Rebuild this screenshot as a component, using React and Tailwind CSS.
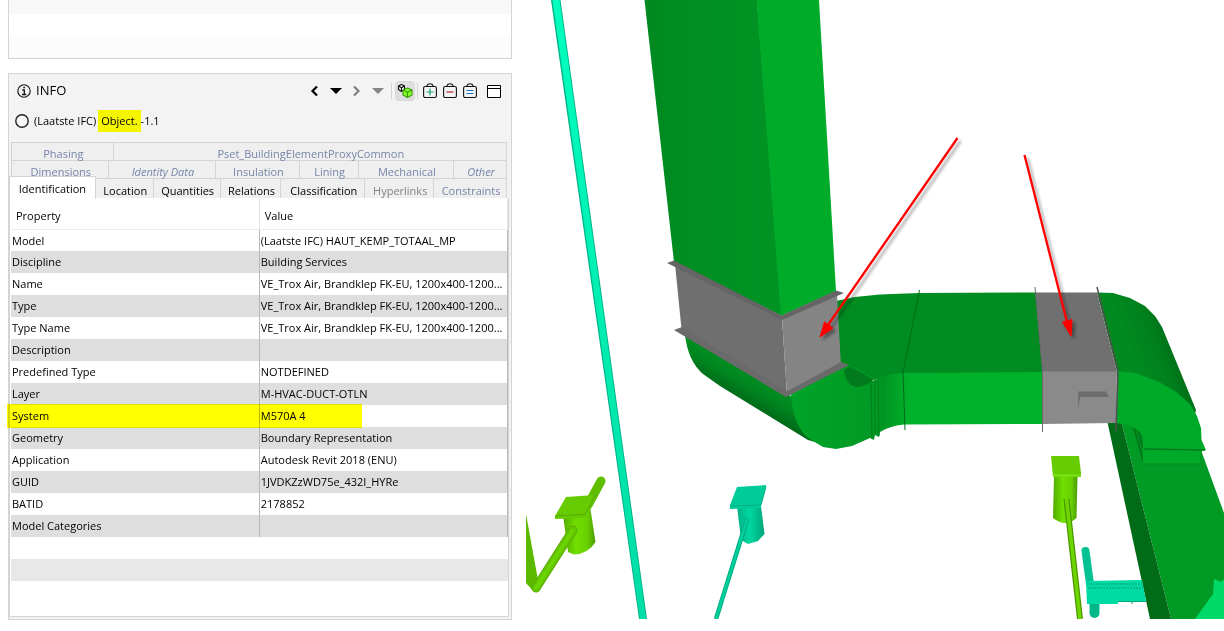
import React from 'react'

const rows = [
  ['Model', '(Laatste IFC) HAUT_KEMP_TOTAAL_MP'],
  ['Discipline', 'Building Services'],
  ['Name', 'VE_Trox Air, Brandklep FK-EU, 1200x400-1200...'],
  ['Type', 'VE_Trox Air, Brandklep FK-EU, 1200x400-1200...'],
  ['Type Name', 'VE_Trox Air, Brandklep FK-EU, 1200x400-1200...'],
  ['Description', ''],
  ['Predefined Type', 'NOTDEFINED'],
  ['Layer', 'M-HVAC-DUCT-OTLN'],
  ['System', 'M570A 4'],
  ['Geometry', 'Boundary Representation'],
  ['Application', 'Autodesk Revit 2018 (ENU)'],
  ['GUID', '1JVDKZzWD75e_432I_HYRe'],
  ['BATID', '2178852'],
  ['Model Categories', ''],
]

function Tab({ children, className = 'text-[#7685a9]' }) {
  return (
    <button
      type="button"
      className={`border-r border-[#d4d4d4] pt-[3px] pl-0.5 whitespace-nowrap text-center ${className}`}
    >
      {children}
    </button>
  )
}

function ToolButton({ label, className = 'w-5', children }) {
  return (
    <button type="button" aria-label={label} className={`h-5 flex items-center justify-center ${className}`}>
      {children}
    </button>
  )
}

function Chevron({ d, color }) {
  return (
    <svg width="9" height="12" viewBox="0 0 9 12" fill="none" stroke={color} strokeWidth="2.2">
      <path d={d} />
    </svg>
  )
}

function Triangle({ color }) {
  return (
    <svg width="12" height="8" viewBox="0 0 12 8" fill={color}>
      <path d="M0 1h12L6 7z" />
    </svg>
  )
}

function Bag({ children, color }) {
  return (
    <svg width="14" height="16" viewBox="0 0 14 16" fill="none" stroke="#111">
      <rect x=".6" y="3.5" width="12.8" height="11" rx="1.6" strokeWidth="1.1" />
      <path d="M3.500 3.500L5 1.200Q7 .2 9 1.200L10.500 3.500" strokeWidth="1.1" />
      <g stroke={color} strokeWidth="1.2">{children}</g>
    </svg>
  )
}

function Cubes() {
  return (
    <svg width="16" height="16" viewBox="0 0 16 16" strokeLinejoin="round">
      <g fill="#eee" stroke="#111" strokeWidth="1.1">
        <path d="M4.500 1.500L7.500 3v3.500L4.500 8.500 1.500 6.500V3z" />
        <path d="M1.500 3l3 1.800L7.500 3M4.500 4.800v3.700" fill="none" />
      </g>
      <g fill="#7fff2a" stroke="#3c9a0c" strokeWidth="1.1">
        <path d="M10.500 5l4.500 2v5l-4.500 2.500L6 12V7z" />
        <path d="M6 7l4.500 2.300L15 7M10.500 9.300v5.200" fill="none" />
      </g>
    </svg>
  )
}

function Toolbar() {
  return (
    <div className="flex items-center">
      <ToolButton label="Back" className="w-[21px]"><Chevron d="M7 1.500L2.500 6 7 10.500" color="#000" /></ToolButton>
      <ToolButton label="Back history" className="w-[21px]"><Triangle color="#000" /></ToolButton>
      <ToolButton label="Forward" className="w-[21px]"><Chevron d="M2 1.500L6.500 6 2 10.500" color="#808080" /></ToolButton>
      <ToolButton label="Forward history" className="w-[21px]"><Triangle color="#858585" /></ToolButton>
      <span className="w-px h-4 bg-[#d4d4d4] mx-[3px]" />
      <ToolButton label="Show related" className="w-5 rounded border border-[#d8d8d8] bg-[#dedede]">
        <Cubes />
      </ToolButton>
      <span className="w-px h-4 bg-[#d4d4d4] mx-0.5" />
      <ToolButton label="Add to basket">
        <Bag color="#12a577"><path d="M7 5.500v7M3.500 9h7" /></Bag>
      </ToolButton>
      <ToolButton label="Remove from basket">
        <Bag color="#b8232f"><path d="M3.500 9h7" /></Bag>
      </ToolButton>
      <ToolButton label="Set basket">
        <Bag color="#1672c4"><path d="M3.500 7.500h7M3.500 10.500h7" /></Bag>
      </ToolButton>
      <ToolButton label="Window" className="w-5 ml-1">
        <svg width="14" height="14" viewBox="0 0 14 14" fill="#fff" stroke="#000">
          <path d="M.5 1.500h13v12H.5zM.5 4.500h13" />
        </svg>
      </ToolButton>
    </div>
  )
}

function InfoPanel() {
  return (
    <section className="flex flex-col border border-[#d4d4d4] bg-[#f3f3f3]">
      <header className="h-[34px] flex items-center justify-between pl-2 pr-[7px]">
        <h2 className="flex items-center gap-[5px] text-[13px]">
          <svg width="14" height="14" viewBox="0 0 14 14" fill="none" stroke="#111">
            <circle cx="7" cy="7" r="6.200" strokeWidth="1.100" />
            <path d="M5.300 6H7.300v4.500M5 10.500h4.300M6.300 3.500h1.600" strokeWidth="1.300" />
          </svg>
          INFO
        </h2>
        <Toolbar />
      </header>

      <div className="h-[26px] mb-2 flex items-center pl-1.5 text-[11px]">
        <svg className="mr-[5px]" width="14" height="14" viewBox="0 0 14 14" fill="#fafafa" stroke="#222">
          <circle cx="7" cy="7" r="6.200" strokeWidth="1.400" />
        </svg>
        <span>(Laatste IFC)</span>
        <mark className="h-[22px] leading-[22px] bg-[#f5f500] text-black ml-0.5 px-[3px]">Object.</mark>
        <span>-1.1</span>
      </div>

      <nav className="mx-0.5 mr-1 text-[11px] leading-[15px] text-black">
        <div className="h-[18px] grid grid-cols-[102fr_395fr] border-t border-l border-[#d4d4d4] bg-[#efefef]">
          <Tab>Phasing</Tab>
          <Tab>Pset_BuildingElementProxyCommon</Tab>
        </div>
        <div className="h-[18px] grid grid-cols-[97fr_108fr_84fr_59fr_96fr_53fr] border-t border-l border-[#d4d4d4] bg-[#efefef]">
          <Tab>Dimensions</Tab>
          <Tab className="text-[#7685a9] italic">Identity Data</Tab>
          <Tab>Insulation</Tab>
          <Tab>Lining</Tab>
          <Tab>Mechanical</Tab>
          <Tab className="text-[#7685a9] italic">Other</Tab>
        </div>
        <div className="h-5 grid grid-cols-[85fr_58fr_67fr_61fr_84fr_69fr_73fr] border-t border-[#d4d4d4] bg-[#efefef]">
          <button
            type="button"
            className="relative -mt-[3px] -ml-0.5 h-[23px] border border-b-0 border-[#d4d4d4] bg-white text-center"
          >
            Identification
          </button>
          <Tab className="text-black">Location</Tab>
          <Tab className="text-black">Quantities</Tab>
          <Tab className="text-black">Relations</Tab>
          <Tab className="text-black">Classification</Tab>
          <Tab className="text-[#858585]">Hyperlinks</Tab>
          <Tab>Constraints</Tab>
        </div>
      </nav>

      <div className="mr-0.5 mb-0.5 pl-px pt-px bg-white border-x border-b border-[#d4d4d4] text-[11px]">
        <table className="w-full table-fixed border-collapse text-left">
          <thead>
            <tr className="h-[30px] border-b border-[#ebebeb]">
              <th className="p-0 pt-1 pl-[5px] font-normal border-r border-[#e4e4e4]">Property</th>
              <th className="p-0 pt-1 pl-[5px] font-normal border-r border-[#e4e4e4]">Value</th>
            </tr>
          </thead>
          <tbody>
            {rows.map(([name, value]) => (
              <tr key={name} className="h-[22px] even:bg-[#dedede]">
                <td className="relative p-0 pt-px pl-px border-r border-[#b8b8b8] whitespace-nowrap">
                  {name}
                  {name === 'System' && (
                    <span className="absolute z-10 -left-1 -top-px w-[355px] h-6 bg-[#ffff00] mix-blend-multiply" />
                  )}
                </td>
                <td className="p-0 pt-px pl-px border-r border-[#b8b8b8] whitespace-nowrap">{value}</td>
              </tr>
            ))}
          </tbody>
        </table>
        <div className="mt-[22px] mb-[35px] h-[22px] bg-[#e8e8e8]" />
      </div>
    </section>
  )
}

function Viewer() {
  return (
    <svg className="w-full h-auto block" viewBox="526 0 698 619" role="img" aria-label="3D model">
      <defs>
        <linearGradient id="side" x1="0" x2="1" y1="0" y2="0">
          <stop offset="0" stopColor="#008a20" />
          <stop offset="1" stopColor="#009424" />
        </linearGradient>
        <linearGradient id="pipe" x1="0" x2="0" y1="0" y2="1">
          <stop offset="0" stopColor="#00ffbf" />
          <stop offset="1" stopColor="#00dda6" />
        </linearGradient>
        <linearGradient id="bend" gradientUnits="userSpaceOnUse" x1="757" y1="372" x2="738" y2="405">
          <stop offset="0" stopColor="#009022" />
          <stop offset=".4" stopColor="#008820" />
          <stop offset="1" stopColor="#006016" />
        </linearGradient>
        <linearGradient id="elbow" gradientUnits="userSpaceOnUse" x1="1130" y1="350" x2="1182" y2="330">
          <stop offset="0" stopColor="#008a20" />
          <stop offset=".5" stopColor="#007f1c" />
          <stop offset="1" stopColor="#005e14" />
        </linearGradient>
        <linearGradient id="front" gradientUnits="userSpaceOnUse" x1="790" y1="0" x2="910" y2="0">
          <stop offset="0" stopColor="#00a427" />
          <stop offset=".65" stopColor="#009a24" />
          <stop offset=".78" stopColor="#009523" />
          <stop offset="1" stopColor="#00b22b" />
        </linearGradient>
        <linearGradient id="lime" x1="0" x2="1" y1="0" y2="0">
          <stop offset="0" stopColor="#52aa00" />
          <stop offset=".4" stopColor="#70df00" />
          <stop offset=".75" stopColor="#68d000" />
          <stop offset="1" stopColor="#4c9a00" />
        </linearGradient>
        <linearGradient id="teal" x1="0" x2="1" y1="0" y2="0">
          <stop offset="0" stopColor="#00b083" />
          <stop offset=".45" stopColor="#00d7a2" />
          <stop offset="1" stopColor="#00a67a" />
        </linearGradient>
        <filter id="shadow" x="-20%" y="-20%" width="140%" height="140%">
          <feDropShadow dx="3" dy="3" stdDeviation="1.500" floodColor="#000" floodOpacity=".35" />
        </filter>
      </defs>

      {/* long pipe */}
      <path d="M551 0H560.500L647 619H639z" fill="#00b589" />
      <path d="M552.500 0H559.500L646 619H640z" fill="url(#pipe)" />

      {/* large duct running to the bottom right */}
      <path d="M1121 420H1190L1224 513V619H1171z" fill="#009a24" />
      <path d="M1107 420H1121L1171 619H1150z" fill="#006c18" />
      <path d="M1195 619L1213 594 1214 579 1221 582 1224 579V619z" fill="#00d868" />
      <path d="M1120 422Q1138 424 1143 437V463L1133 427z" fill="#008a20" />
      <path d="M1134 428L1143 461M1138 430L1143 448" stroke="#006c18" fill="none" />

      {/* right elbow */}
      <path d="M1097 292.500L1113 293 1130 298 1145 306 1155 316 1162 327 1196 410 1195 414 1160 385 1117 372z" fill="url(#elbow)" />
      <path d="M1117 371L1135 373 1157 381 1175 391 1190 404 1197 416 1201 428 1201.500 440 1206 450 1202 451 1202 464H1143V437Q1138 425 1116 423z" fill="#00aa29" />
      <path d="M1144 449L1205 450" stroke="#007a1c" strokeWidth="1.300" />
      <path d="M1143 464H1201V453" fill="none" stroke="#008a20" />

      {/* bend under the vertical duct */}
      <path d="M685 335L791 396 815 405 815 442 808 440 720 386 703 374Q688 361 685 335z" fill="url(#bend)" />

      {/* horizontal duct */}
      <path d="M836 301L855 297 880 294.500 919 293 1036 292.500 1043 373 905 374 880 378 870 381 840 366z" fill="#008c21" />
      <path d="M791 394L845 366 862 375 873 381Q887 373 903 373L1043 372V424L904 424.500Q889 426 880 432L879 437 875 435 874 440 870 438 852 446 836 449 823 447 808 438Q793 425 791 394z" fill="url(#front)" />
      <path d="M844 370Q846 386 857 387 867 386 873 380L862 373 849 367z" fill="#007a1c" />
      <path d="M871 380L872 439M875 379V434M878 377L879 436" stroke="#007f1e" fill="none" />
      <path d="M849 365L874 379" stroke="#009c25" fill="none" />
      <path d="M919.500 290L903 372 905 430" stroke="#006c18" fill="none" />

      {/* vertical duct */}
      <path d="M644.500 0H757L782 316 674 262z" fill="url(#side)" />
      <path d="M756.500 0H819L836 291 781 316z" fill="#00ab29" />

      {/* left damper */}
      <path d="M675 264L782 318 787 394 681.500 329z" fill="#6f6f6f" />
      <path d="M782 318L837 294 841 366 787 394z" fill="#848484" />
      <path d="M667 263L674 260.500 781.500 315.500 836 290.500 844 293 782 320z" fill="#656565" />
      <path d="M674 330L682 327 787 391.500 841 362 849 365 786 397z" fill="#6a6a6a" />

      {/* right damper */}
      <path d="M1035.500 292.500H1097L1117 372H1042.500z" fill="#707070" />
      <path d="M1042.500 371.500H1117L1116 423 1042.500 424z" fill="#8a8a8a" />
      <path d="M1035 287L1042.500 371V432" stroke="#686868" fill="none" />
      <path d="M1097 287L1118 371 1116 431" stroke="#505050" strokeWidth="1.500" fill="none" />
      <path d="M1078 391.500H1106L1109 397H1080L1078.500 409z" fill="#6c6c6c" />

      {/* lime terminals */}
      <path d="M526 514L538 580 534 592 526 583z" fill="#5cb900" />
      <path d="M588 505L601 481" stroke="#5fbe00" strokeWidth="9" strokeLinecap="round" />
      <path d="M563 515L590 506 595.500 542Q588 554 574 554.500L568 552z" fill="url(#lime)" />
      <path d="M555 516L566 497 595 495 586 514 585 518 555 519z" fill="#66cb00" />
      <path d="M555 516L585 514.500 595 495" fill="none" stroke="#57ad00" />
      <path d="M573 530L536 588" stroke="#58ab00" strokeWidth="9" strokeLinecap="round" />
      <path d="M573 530L536 588" stroke="#64c700" strokeWidth="7" strokeLinecap="round" />
      <path d="M573 530L536 588" stroke="#6bd600" strokeWidth="3" strokeLinecap="round" />

      <path d="M1054 476H1077.500L1076.500 518Q1066 528 1053 518z" fill="url(#lime)" />
      <path d="M1051 456H1079L1081 473V477H1053z" fill="#66cb00" />
      <path d="M1053 475.500H1081" stroke="#7be51a" strokeWidth="2" />
      <path d="M1066.500 499L1080 619" stroke="#4c9600" strokeWidth="6" />
      <path d="M1066.500 499L1080 619" stroke="#6dd600" strokeWidth="3.500" />

      {/* teal terminals */}
      <path d="M737 506H761L764.500 534 758 541 748 544 741 540z" fill="url(#teal)" />
      <path d="M737 487L766 485 765 492 761 505V508L730 509V505z" fill="#00cc99" />
      <path d="M730 506L761 505 766 486" stroke="#00ae83" fill="none" />
      <path d="M747.500 518L716 619" stroke="#00ae82" strokeWidth="4.500" />
      <path d="M747.500 518L716 619" stroke="#00d09c" strokeWidth="2.500" />

      <path d="M1085.500 551L1090 584" stroke="#00c292" strokeWidth="8" strokeLinecap="round" />
      <path d="M1094.500 602V613" stroke="#00b789" strokeWidth="10" strokeLinecap="round" />
      <path d="M1086 581L1142 580 1146 601H1118V604H1087z" fill="#00dba5" />
      <path d="M1087 584H1142M1088 588H1143" stroke="#00bd8e" strokeWidth="2" strokeDasharray="2 1" />
      <path d="M1118 601.500H1146M1132 601V604" stroke="#00a67a" />

      {/* annotation arrows */}
      <g filter="url(#shadow)" stroke="#f00" strokeWidth="2.300" fill="#f00">
        <path d="M957.500 138L828 325" />
        <path d="M820 337L824.500 322 833 328z" strokeWidth="1" />
      </g>
      <g filter="url(#shadow)" stroke="#f00" strokeWidth="2.300" fill="#f00">
        <path d="M1024.500 155L1067 322" />
        <path d="M1071 336L1062.500 322 1072 319.500z" strokeWidth="1" />
      </g>
    </svg>
  )
}

export default function App() {
  return (
    <div className="flex items-start gap-3.5 pl-2 pb-3 bg-white text-black font-['Open_Sans','Noto_Sans',sans-serif]">
      <aside className="w-[504px] shrink-0 flex flex-col gap-3.5">
        <div className="border-x border-b border-[#d4d4d4]">
          <div className="h-3.5 bg-[#f8f8f8]" />
          <div className="h-[22px] bg-white" />
          <div className="h-[22px] bg-[#fcfcfc]" />
        </div>
        <InfoPanel />
      </aside>
      <main className="flex-1 min-w-0">
        <Viewer />
      </main>
    </div>
  )
}
